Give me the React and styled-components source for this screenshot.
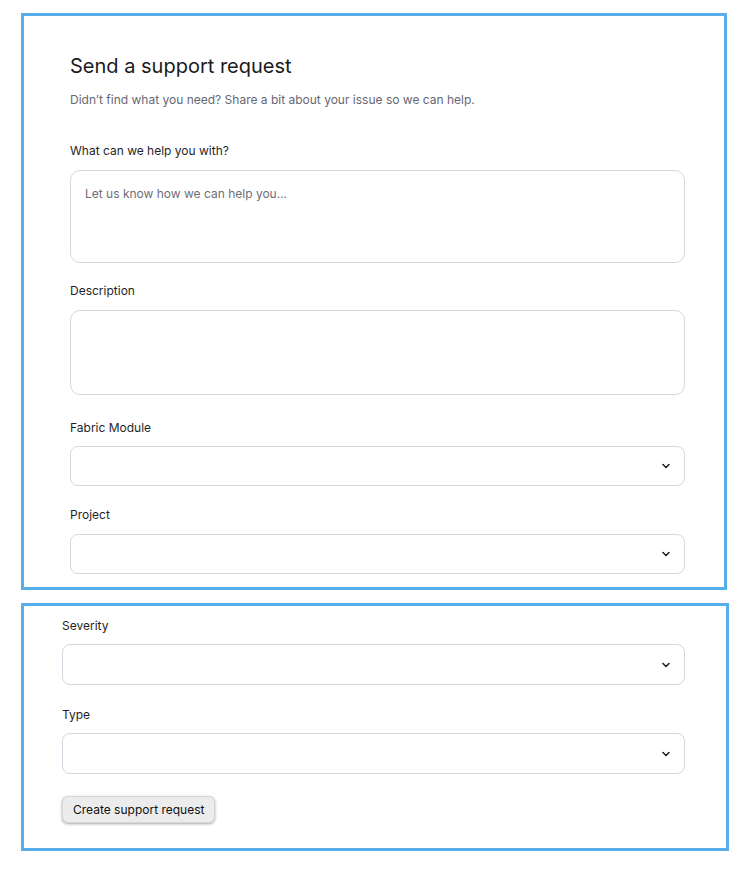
import React from 'react'
import styled, { createGlobalStyle } from 'styled-components'

const GlobalStyle = createGlobalStyle`
  body {
    margin: 0;
    background: #fff;
    font-family: Inter, "Noto Sans", sans-serif;
    color: #1c1c24;
  }
  * { box-sizing: border-box; }
`

const Page = styled.div`
  display: flex;
  flex-direction: column;
  gap: 13px;
  padding: 13px 21px 20px 21px;
`

const Panel = styled.section`
  border: 3px solid #58aeea;
  display: flex;
  flex-direction: column;
  padding: ${({ $pad }) => $pad};
  margin-right: ${({ $wide }) => ($wide ? '0' : '2px')};
`

const Title = styled.h1`
  margin: 0;
  font-size: 20px;
  line-height: 28px;
  font-weight: 400;
  color: #1a1a22;
`

const Subtitle = styled.p`
  margin: 10px 0 0;
  font-size: 12px;
  line-height: 20px;
  color: #676774;
`

const Form = styled.div`
  display: flex;
  flex-direction: column;
  margin-top: ${({ $top }) => $top || '0'};
`

const Field = styled.label`
  display: flex;
  flex-direction: column;
  gap: ${({ $gap }) => $gap ?? 10}px;
  margin-top: ${({ $mt }) => $mt ?? 0}px;
`

const Label = styled.span`
  font-size: 12px;
  line-height: 18px;
  color: #1f1f27;
`

const TextArea = styled.textarea`
  height: ${({ $h }) => $h}px;
  resize: none;
  border: 1px solid #d8d6e2;
  border-radius: 10px;
  padding: 14px 14px;
  font-family: Inter, "Noto Sans", sans-serif;
  font-size: 12px;
  line-height: 18px;
  color: #1c1c24;
  outline: none;
  &::placeholder { color: #6d6d78; }
`

const Select = styled.div`
  height: ${({ $h }) => $h}px;
  border: 1px solid #d8d6e2;
  border-radius: 8px;
  display: flex;
  align-items: center;
  justify-content: flex-end;
  padding-right: 13px;
  color: #222;
`

const Button = styled.button`
  align-self: flex-start;
  margin-top: 22px;
  height: 27px;
  padding: 0 10px;
  font-family: Inter, "Noto Sans", sans-serif;
  font-size: 12px;
  color: #111;
  background: #ececec;
  border: 1px solid #d6d6d6;
  border-radius: 6px;
  box-shadow: 0 1px 3px rgba(0, 0, 0, 0.35);
`

const Chevron = () => (
  <svg width="10" height="10" viewBox="0 0 10 10" fill="none">
    <path d="M2 3.5 L5 6.5 L8 3.5" stroke="#222" strokeWidth="1.6" strokeLinecap="round" strokeLinejoin="round" />
  </svg>
)

const Dropdown = ({ label, gap, mt, h = 40 }) => (
  <Field $gap={gap} $mt={mt}>
    <Label>{label}</Label>
    <Select $h={h}>
      <Chevron />
    </Select>
  </Field>
)

const App = () => (
  <>
    <GlobalStyle />
    <Page>
      <Panel $pad="36px 39px 13px 46px">
        <Title>Send a support request</Title>
        <Subtitle>Didn’t find what you need? Share a bit about your issue so we can help.</Subtitle>
        <Form $top="32px">
          <Field>
            <Label>What can we help you with?</Label>
            <TextArea $h={93} placeholder="Let us know how we can help you..." />
          </Field>
          <Field $mt={19}>
            <Label>Description</Label>
            <TextArea $h={85} />
          </Field>
          <Dropdown label="Fabric Module" mt={24} gap={9} />
          <Dropdown label="Project" mt={20} />
        </Form>
      </Panel>
      <Panel $wide $pad="11px 41px 25px 38px">
        <Form>
          <Dropdown label="Severity" gap={9} h={41} />
          <Dropdown label="Type" mt={21} gap={9} h={41} />
          <Button>Create support request</Button>
        </Form>
      </Panel>
    </Page>
  </>
)

export default App
